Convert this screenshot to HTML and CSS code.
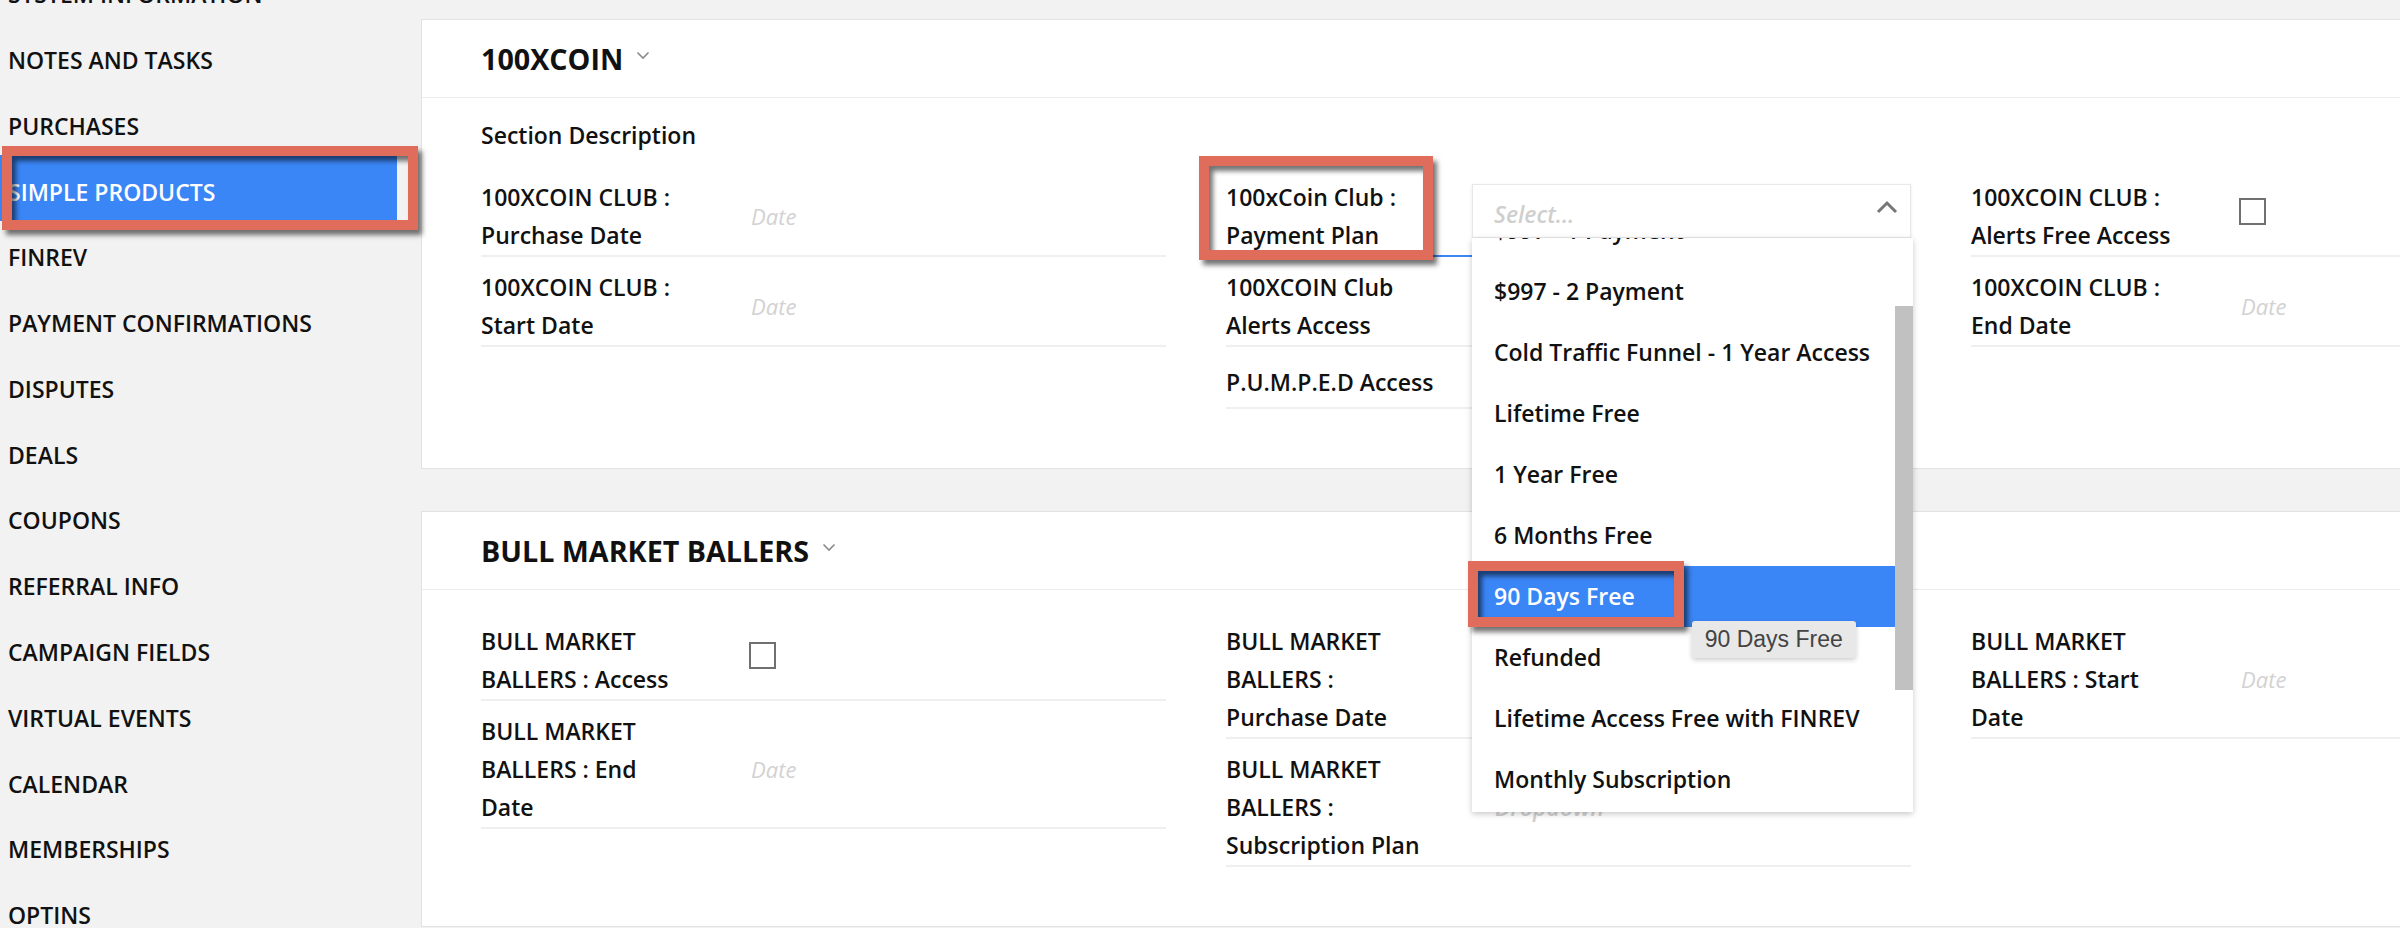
FILE: index.html
```html
<!DOCTYPE html>
<html lang="en">
<head>
<meta charset="utf-8">
<title>Simple Products</title>
<link rel="stylesheet" href="styles.css">
</head>
<body>
<div class="app">
  <aside class="sidebar">
    <nav class="nav">
      <div class="nav-item">System Information</div>
      <div class="nav-item">Notes and Tasks</div>
      <div class="nav-item">Purchases</div>
      <div class="nav-item active">Simple Products<span class="annot"></span></div>
      <div class="nav-item">Finrev</div>
      <div class="nav-item">Payment Confirmations</div>
      <div class="nav-item">Disputes</div>
      <div class="nav-item">Deals</div>
      <div class="nav-item">Coupons</div>
      <div class="nav-item">Referral Info</div>
      <div class="nav-item">Campaign Fields</div>
      <div class="nav-item">Virtual Events</div>
      <div class="nav-item">Calendar</div>
      <div class="nav-item">Memberships</div>
      <div class="nav-item">Optins</div>
    </nav>
  </aside>

  <main class="main">
    <section class="card">
      <header class="card-head">
        <h2 class="card-title">100XCOIN</h2>
        <svg class="chev" width="14" height="9" viewBox="0 0 14 9"><path d="M1.5 1.5l5.5 5.5 5.5-5.5" fill="none" stroke="#8a8a8a" stroke-width="1.6"/></svg>
      </header>
      <div class="card-body">
        <div class="desc">Section Description</div>
        <div class="cols">
          <div class="col">
            <div class="row">
              <div class="label">100XCOIN CLUB :<br>Purchase Date</div>
              <div class="date">Date</div>
            </div>
            <div class="row">
              <div class="label">100XCOIN CLUB :<br>Start Date</div>
              <div class="date">Date</div>
            </div>
          </div>
          <div class="col">
            <div class="row focus">
              <div class="label">100xCoin Club :<br>Payment Plan<span class="annot annot-label"></span></div>
              <div class="select">
                <span class="select-ph">Select...</span>
                <svg class="select-caret" width="22" height="14" viewBox="0 0 22 14"><path d="M2 12l9-9 9 9" fill="none" stroke="#777" stroke-width="3"/></svg>
                <div class="menu">
                  <div class="menu-list">
                    <div class="menu-items">
                      <div class="menu-item">$997 - 1 Payment</div>
                      <div class="menu-item">$997 - 2 Payment</div>
                      <div class="menu-item">Cold Traffic Funnel - 1 Year Access</div>
                      <div class="menu-item">Lifetime Free</div>
                      <div class="menu-item">1 Year Free</div>
                      <div class="menu-item">6 Months Free</div>
                      <div class="menu-item hl">90 Days Free</div>
                      <div class="menu-item">Refunded</div>
                      <div class="menu-item">Lifetime Access Free with FINREV</div>
                      <div class="menu-item">Monthly Subscription</div>
                      <div class="menu-item">Annual Subscription</div>
                    </div>
                  </div>
                  <div class="thumb"></div>
                  <span class="annot annot-item"></span>
                  <div class="tooltip">90 Days Free</div>
                </div>
              </div>
            </div>
            <div class="row">
              <div class="label">100XCOIN Club<br>Alerts Access</div>
              <div class="checkbox"></div>
            </div>
            <div class="row">
              <div class="label">P.U.M.P.E.D Access</div>
              <div class="checkbox"></div>
            </div>
          </div>
          <div class="col">
            <div class="row">
              <div class="label">100XCOIN CLUB :<br>Alerts Free Access</div>
              <div class="checkbox"></div>
            </div>
            <div class="row">
              <div class="label">100XCOIN CLUB :<br>End Date</div>
              <div class="date">Date</div>
            </div>
          </div>
        </div>
      </div>
    </section>

    <section class="card">
      <header class="card-head">
        <h2 class="card-title">BULL MARKET BALLERS</h2>
        <svg class="chev" width="14" height="9" viewBox="0 0 14 9"><path d="M1.5 1.5l5.5 5.5 5.5-5.5" fill="none" stroke="#8a8a8a" stroke-width="1.6"/></svg>
      </header>
      <div class="card-body nodesc">
        <div class="cols">
          <div class="col">
            <div class="row">
              <div class="label">BULL MARKET<br>BALLERS : Access</div>
              <div class="checkbox"></div>
            </div>
            <div class="row">
              <div class="label">BULL MARKET<br>BALLERS : End<br>Date</div>
              <div class="date">Date</div>
            </div>
          </div>
          <div class="col">
            <div class="row">
              <div class="label">BULL MARKET<br>BALLERS :<br>Purchase Date</div>
              <div class="date">Date</div>
            </div>
            <div class="row">
              <div class="label">BULL MARKET<br>BALLERS :<br>Subscription Plan</div>
              <div class="dropdown">Dropdown</div>
            </div>
          </div>
          <div class="col">
            <div class="row">
              <div class="label">BULL MARKET<br>BALLERS : Start<br>Date</div>
              <div class="date">Date</div>
            </div>
          </div>
        </div>
      </div>
    </section>
  </main>
</div>
</body>
</html>
```
FILE: styles.css
```css
* { box-sizing: border-box; }
html, body { margin: 0; padding: 0; }
body {
  width: 2400px;
  height: 928px;
  overflow: hidden;
  background: #f2f2f2;
  font-family: "Open Sans", "Liberation Sans", sans-serif;
  color: #111;
}
.app { display: flex; height: 928px; }

/* sidebar */
.sidebar { flex: 0 0 421px; background: #f2f2f2; padding-right: 24px; }
.nav { margin-top: -42.4px; display: flex; flex-direction: column; }
.nav-item {
  position: relative;
  height: 65.8px;
  flex: 0 0 65.8px;
  padding: 20.5px 0 0 8px;
  font-size: 23px;
  font-weight: 600;
  line-height: 32.7px;
  text-transform: uppercase;
  white-space: nowrap;
}
.nav-item.active { background: #3b86f6; color: #fff; }

/* annotation rectangles */
.annot {
  position: absolute;
  border: 10px solid #e06c5c;
  box-shadow: 4px 5px 5px rgba(0,0,0,.55), inset 4px 5px 5px rgba(0,0,0,.55);
  pointer-events: none;
  z-index: 20;
}
.nav-item .annot { left: 2px; top: -9.5px; right: -21px; bottom: -9.5px; }
.annot-label { left: -27px; top: -22px; width: 234px; height: 104px; }
.annot-item { left: -4px; top: 323px; width: 216px; height: 66px; }

/* main */
.main { flex: 1; min-width: 0; padding-top: 19px; overflow: hidden; }
.card { background: #fff; border: 1px solid #e2e2e2; border-right: 0; }
.card + .card { margin-top: 41.7px; }
.card-head {
  height: 78px;
  border-bottom: 1px solid #ececec;
  display: flex;
  align-items: center;
  padding-left: 59px;
}
.card-title { margin: 0; font-size: 28.7px; font-weight: 700; line-height: 39px; }
.chev { margin-left: 13px; transform: translateY(-3px); }

.card-body { padding: 18px 0 59px 59px; }
.card-body.nodesc { padding-top: 20.6px; }
.desc { font-size: 23px; font-weight: 600; line-height: 38px; margin-bottom: 13.3px; }
.cols { display: grid; grid-template-columns: repeat(3, 685px); column-gap: 60px; align-items: start; }

.row {
  position: relative;
  display: flex;
  align-items: center;
  min-height: 62px;
  padding: 11px 0 1px;
  border-bottom: 2px solid #efefef;
}
.row.focus { border-bottom-color: #3b86f6; }
.label {
  position: relative;
  flex: 0 0 216px;
  margin-right: 30px;
  font-size: 23px;
  font-weight: 600;
  line-height: 38px;
  white-space: nowrap;
}
.date {
  flex: 1;
  padding-left: 24px;
  font-size: 22px;
  font-style: italic;
  color: #d2d2d2;
}
.dropdown {
  flex: 1;
  padding-left: 23px;
  font-size: 23px;
  font-style: italic;
  font-weight: 600;
  color: #d0d0d0;
}
.checkbox {
  width: 27px;
  height: 27px;
  margin-left: 22px;
  margin-bottom: 9px;
  border: 2.5px solid #707070;
  background: #fff;
}

/* open select */
.select {
  position: relative;
  z-index: 10;
  flex: 1;
  height: 54px;
  margin-bottom: 11px;
  background: #fff;
  border: 1px solid #e8e8e8;
  box-shadow: 0 1px 3px rgba(0,0,0,.1);
  display: flex;
  justify-content: space-between;
  align-items: flex-start;
  padding: 14px 12px 0 21px;
}
.select-ph {
  font-size: 23px;
  font-style: italic;
  font-weight: 600;
  line-height: 31px;
  color: #cfcfcf;
}
.select-caret { margin-top: 1px; }
.menu {
  position: absolute;
  left: -1px;
  top: 53px;
  width: 441px;
  height: 574px;
  background: #fff;
  box-shadow: 0 2px 6px rgba(0,0,0,.22);
}
.menu-list { height: 100%; overflow: hidden; }
.menu-items { margin-top: -38px; margin-right: 18px; }
.menu-item {
  height: 61px;
  display: flex;
  align-items: center;
  padding-left: 22px;
  font-size: 23px;
  font-weight: 600;
  white-space: nowrap;
}
.menu-item.hl { background: #3b86f6; color: #fff; }
.thumb { position: absolute; right: 0; top: 68px; width: 18px; height: 384px; background: #c1c1c1; }
.tooltip {
  position: absolute;
  left: 219.7px;
  top: 383px;
  padding: 5.6px 13px;
  background: #e8e8e8;
  border-radius: 3px;
  box-shadow: 0 2px 5px rgba(0,0,0,.2);
  font-family: "Liberation Sans", Arial, sans-serif;
  font-size: 23px;
  line-height: 26.4px;
  color: #444;
  white-space: nowrap;
  z-index: 25;
}
```
